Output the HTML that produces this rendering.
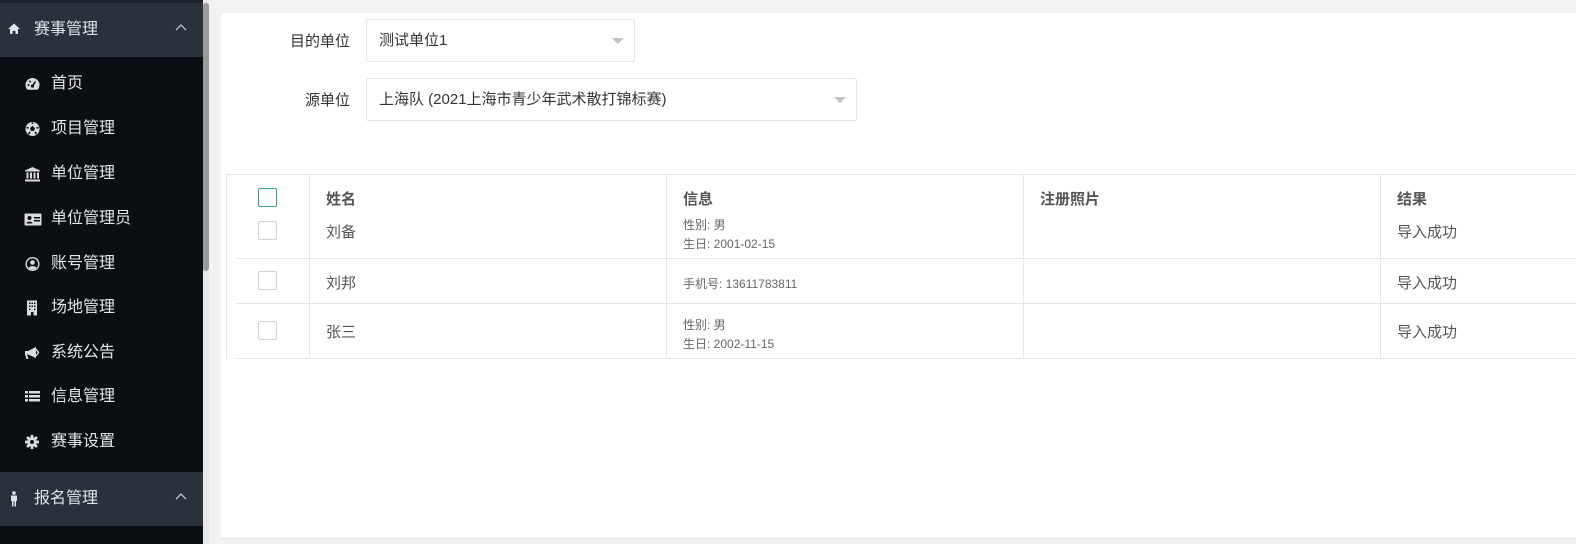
<!DOCTYPE html>
<html><head><meta charset="utf-8"><style>
*{margin:0;padding:0;box-sizing:border-box}
body{width:1576px;height:544px;overflow:hidden;background:#f2f2f2;font-family:"Liberation Sans","Noto Sans CJK SC",sans-serif;position:relative}
.side{position:absolute;left:0;top:0;width:203px;height:544px;background:#0b0e13}
.scroll{position:absolute;left:203px;top:0;width:6px;height:544px;background:#e8e8e8}
.thumb{position:absolute;left:203px;top:3px;width:6px;height:268px;background:#9a9a9a;border-radius:3px}
.hd{position:absolute;left:0;width:203px;height:54px;background:#29313b;color:#dfe3e8;font-size:16px;line-height:54px;padding-left:34px}
.hd svg{position:absolute;left:7px;top:19px}
.hd .ar{position:absolute;left:175px;top:20px}
.it{position:absolute;left:0;width:203px;color:#e3e6ea;font-size:16px;height:20px;line-height:20px;padding-left:51px}
.it svg{position:absolute;left:24px;top:2px}
.panel{position:absolute;left:221px;top:13px;width:1360px;height:526px;background:#fff;border-radius:3px;border-bottom:1px solid #e6e6e6}
.lab{position:absolute;font-size:15px;color:#333;text-align:right;width:90px}
.sel{position:absolute;border:1px solid #e6e6e6;border-radius:2px;height:43px;font-size:15px;color:#333;line-height:41px;padding-left:12px}
.sel:after{content:"";position:absolute;right:10px;top:18px;border:6px solid transparent;border-top:6px solid #c2c2c2}
.tbl{position:absolute;left:226px;top:174px;width:1350px;height:185px;border-top:1px solid #e6e6e6;border-left:1px solid #e6e6e6}
.vl{position:absolute;top:174px;width:1px;height:184px;background:#e6e6e6}
.hl{position:absolute;left:236px;width:1340px;height:1px;background:#e6e6e6}
.t{position:absolute;font-size:15px;color:#555;white-space:nowrap}
.th{font-weight:bold;color:#555}
.s{position:absolute;font-size:12px;color:#666;line-height:19px;white-space:nowrap}
.cb{position:absolute;left:258px;width:19px;height:19px;border:1px solid #d2d2d2;border-radius:2px;background:#fff}
</style></head><body>
<div class="side"></div>
<div style="position:absolute;left:0;top:0;width:203px;height:3px;background:#1c2229"></div>
<div class="scroll"></div><div class="thumb"></div>
<div class="hd" style="top:3px"><svg width="14" height="14" viewBox="0 0 14 14"><path d="M1 7L7 1.5 13 7H11V12H8.5V9H5.5V12H3V7Z" fill="#dfe3e8"/></svg>赛事管理<svg class="ar" width="12" height="8" viewBox="0 0 12 8"><path d="M1 7L6 2 11 7" stroke="#c0c4c8" stroke-width="1.3" fill="none"/></svg></div>
<div class="it" style="top:74px"><svg width="17" height="16" viewBox="0 0 17 16"><path d="M8.5 2A7 7 0 0 0 1.5 9C1.5 11 2.3 12.6 3.5 13.8H13.5C14.7 12.6 15.5 11 15.5 9A7 7 0 0 0 8.5 2Z" fill="#d8dbe0"/><circle cx="8.5" cy="10" r="1.6" fill="#0b0e13"/><path d="M8.5 10L11.5 5.5" stroke="#0b0e13" stroke-width="1.5"/><circle cx="4.5" cy="9" r="1" fill="#0b0e13"/><circle cx="6" cy="5.5" r="1" fill="#0b0e13"/></svg>首页</div>
<div class="it" style="top:119px"><svg width="17" height="16" viewBox="0 0 17 16"><circle cx="8.5" cy="8" r="7" fill="#d8dbe0"/><path d="M8.5 5L11 7 10 10H7L6 7Z" fill="#0b0e13"/><path d="M8.5 1.5V3M14.5 6.5L12.5 7M12.5 13L11 11M4.5 13L6 11M2.5 6.5L4.5 7" stroke="#0b0e13" stroke-width="1.6"/></svg>项目管理</div>
<div class="it" style="top:164px"><svg width="17" height="16" viewBox="0 0 17 16"><path d="M8.5 1L16 4.5V5.5H1V4.5Z" fill="#d8dbe0"/><rect x="2.5" y="6.5" width="2" height="6" fill="#d8dbe0"/><rect x="6" y="6.5" width="2" height="6" fill="#d8dbe0"/><rect x="9.5" y="6.5" width="2" height="6" fill="#d8dbe0"/><rect x="13" y="6.5" width="2" height="6" fill="#d8dbe0"/><rect x="1" y="13.5" width="15" height="2" fill="#d8dbe0"/></svg>单位管理</div>
<div class="it" style="top:209px"><svg width="18" height="16" viewBox="0 0 18 16"><rect x="0.5" y="2.5" width="17" height="12" rx="1" fill="#d8dbe0"/><circle cx="5.5" cy="7" r="2" fill="#0b0e13"/><path d="M2.5 12.5C2.5 10 8.5 10 8.5 12.5Z" fill="#0b0e13"/><rect x="10" y="6" width="6" height="1.5" fill="#0b0e13"/><rect x="10" y="9" width="6" height="1.5" fill="#0b0e13"/></svg>单位管理员</div>
<div class="it" style="top:254px"><svg width="17" height="16" viewBox="0 0 17 16"><circle cx="8.5" cy="8" r="7" fill="#d8dbe0"/><circle cx="8.5" cy="8" r="5.6" fill="#0b0e13"/><circle cx="8.5" cy="6.5" r="2.3" fill="#d8dbe0"/><path d="M4.5 12C5.5 9.5 11.5 9.5 12.5 12 10.5 14 6.5 14 4.5 12Z" fill="#d8dbe0"/></svg>账号管理</div>
<div class="it" style="top:298px"><svg width="17" height="16" viewBox="0 0 17 16"><rect x="3" y="0.5" width="10" height="15" fill="#d8dbe0"/><g fill="#0b0e13"><rect x="5" y="2.5" width="1.5" height="1.5"/><rect x="7.5" y="2.5" width="1.5" height="1.5"/><rect x="10" y="2.5" width="1.5" height="1.5"/><rect x="5" y="5.5" width="1.5" height="1.5"/><rect x="7.5" y="5.5" width="1.5" height="1.5"/><rect x="10" y="5.5" width="1.5" height="1.5"/><rect x="5" y="8.5" width="1.5" height="1.5"/><rect x="10" y="8.5" width="1.5" height="1.5"/><rect x="7" y="12" width="2.5" height="3.5"/></g></svg>场地管理</div>
<div class="it" style="top:343px"><svg width="17" height="16" viewBox="0 0 17 16"><path d="M1 6H4L12 2V13L4 9.5H3L4.5 14H2.5L1 9.5Z" fill="#d8dbe0"/><path d="M12 4L14.5 7.5 12 11" stroke="#d8dbe0" stroke-width="1.4" fill="none"/></svg>系统公告</div>
<div class="it" style="top:387px"><svg width="17" height="16" viewBox="0 0 17 16"><g fill="#d8dbe0"><rect x="1" y="2" width="3" height="2.5"/><rect x="5" y="2" width="11" height="2.5"/><rect x="1" y="6" width="3" height="2.5"/><rect x="5" y="6" width="11" height="2.5"/><rect x="1" y="10" width="3" height="2.5"/><rect x="5" y="10" width="11" height="2.5"/></g></svg>信息管理</div>
<div class="it" style="top:432px"><svg width="17" height="16" viewBox="0 0 17 16"><g transform="translate(8,8)"><circle r="4.8" fill="#d8dbe0"/><g fill="#d8dbe0"><rect x="-1.4" y="-7" width="2.8" height="14"/><rect x="-1.4" y="-7" width="2.8" height="14" transform="rotate(45)"/><rect x="-1.4" y="-7" width="2.8" height="14" transform="rotate(90)"/><rect x="-1.4" y="-7" width="2.8" height="14" transform="rotate(135)"/></g><circle r="2" fill="#0b0e13"/></g></svg>赛事设置</div>
<div class="hd" style="top:472px"><svg width="14" height="16" viewBox="0 0 14 16" style="top:19px"><circle cx="7" cy="2" r="1.8" fill="#dfe3e8"/><path d="M4 4.5H10V10H9V15.5H7.5V10.5H6.5V15.5H5V10H4Z" fill="#dfe3e8"/></svg>报名管理<svg class="ar" width="12" height="8" viewBox="0 0 12 8"><path d="M1 7L6 2 11 7" stroke="#c0c4c8" stroke-width="1.3" fill="none"/></svg></div>
<div class="panel"></div>
<div class="lab" style="left:260px;top:30px">目的单位</div>
<div class="sel" style="left:366px;top:19px;width:269px">测试单位1</div>
<div class="lab" style="left:260px;top:89px">源单位</div>
<div class="sel" style="left:366px;top:78px;width:491px">上海队 (2021上海市青少年武术散打锦标赛)</div>
<div class="tbl"></div>
<div class="vl" style="left:309px"></div><div class="vl" style="left:666px"></div><div class="vl" style="left:1023px"></div><div class="vl" style="left:1380px"></div>
<div class="hl" style="top:258px"></div><div class="hl" style="top:303px"></div><div class="hl" style="top:358px"></div>
<div class="cb" style="top:188px;border-color:#3aa37a"></div>
<div class="cb" style="top:221px"></div><div class="cb" style="top:271px"></div><div class="cb" style="top:321px"></div>
<div class="t th" style="left:326px;top:188px">姓名</div>
<div class="t th" style="left:683px;top:188px">信息</div>
<div class="t th" style="left:1040px;top:188px">注册照片</div>
<div class="t th" style="left:1397px;top:188px">结果</div>
<div class="t" style="left:326px;top:221px">刘备</div>
<div class="s" style="left:683px;top:216px">性别: 男<br>生日: 2001-02-15</div>
<div class="t" style="left:1397px;top:221px">导入成功</div>
<div class="t" style="left:326px;top:272px">刘邦</div>
<div class="s" style="left:683px;top:275px">手机号: 13611783811</div>
<div class="t" style="left:1397px;top:272px">导入成功</div>
<div class="t" style="left:326px;top:321px">张三</div>
<div class="s" style="left:683px;top:316px">性别: 男<br>生日: 2002-11-15</div>
<div class="t" style="left:1397px;top:321px">导入成功</div>
</body></html>
